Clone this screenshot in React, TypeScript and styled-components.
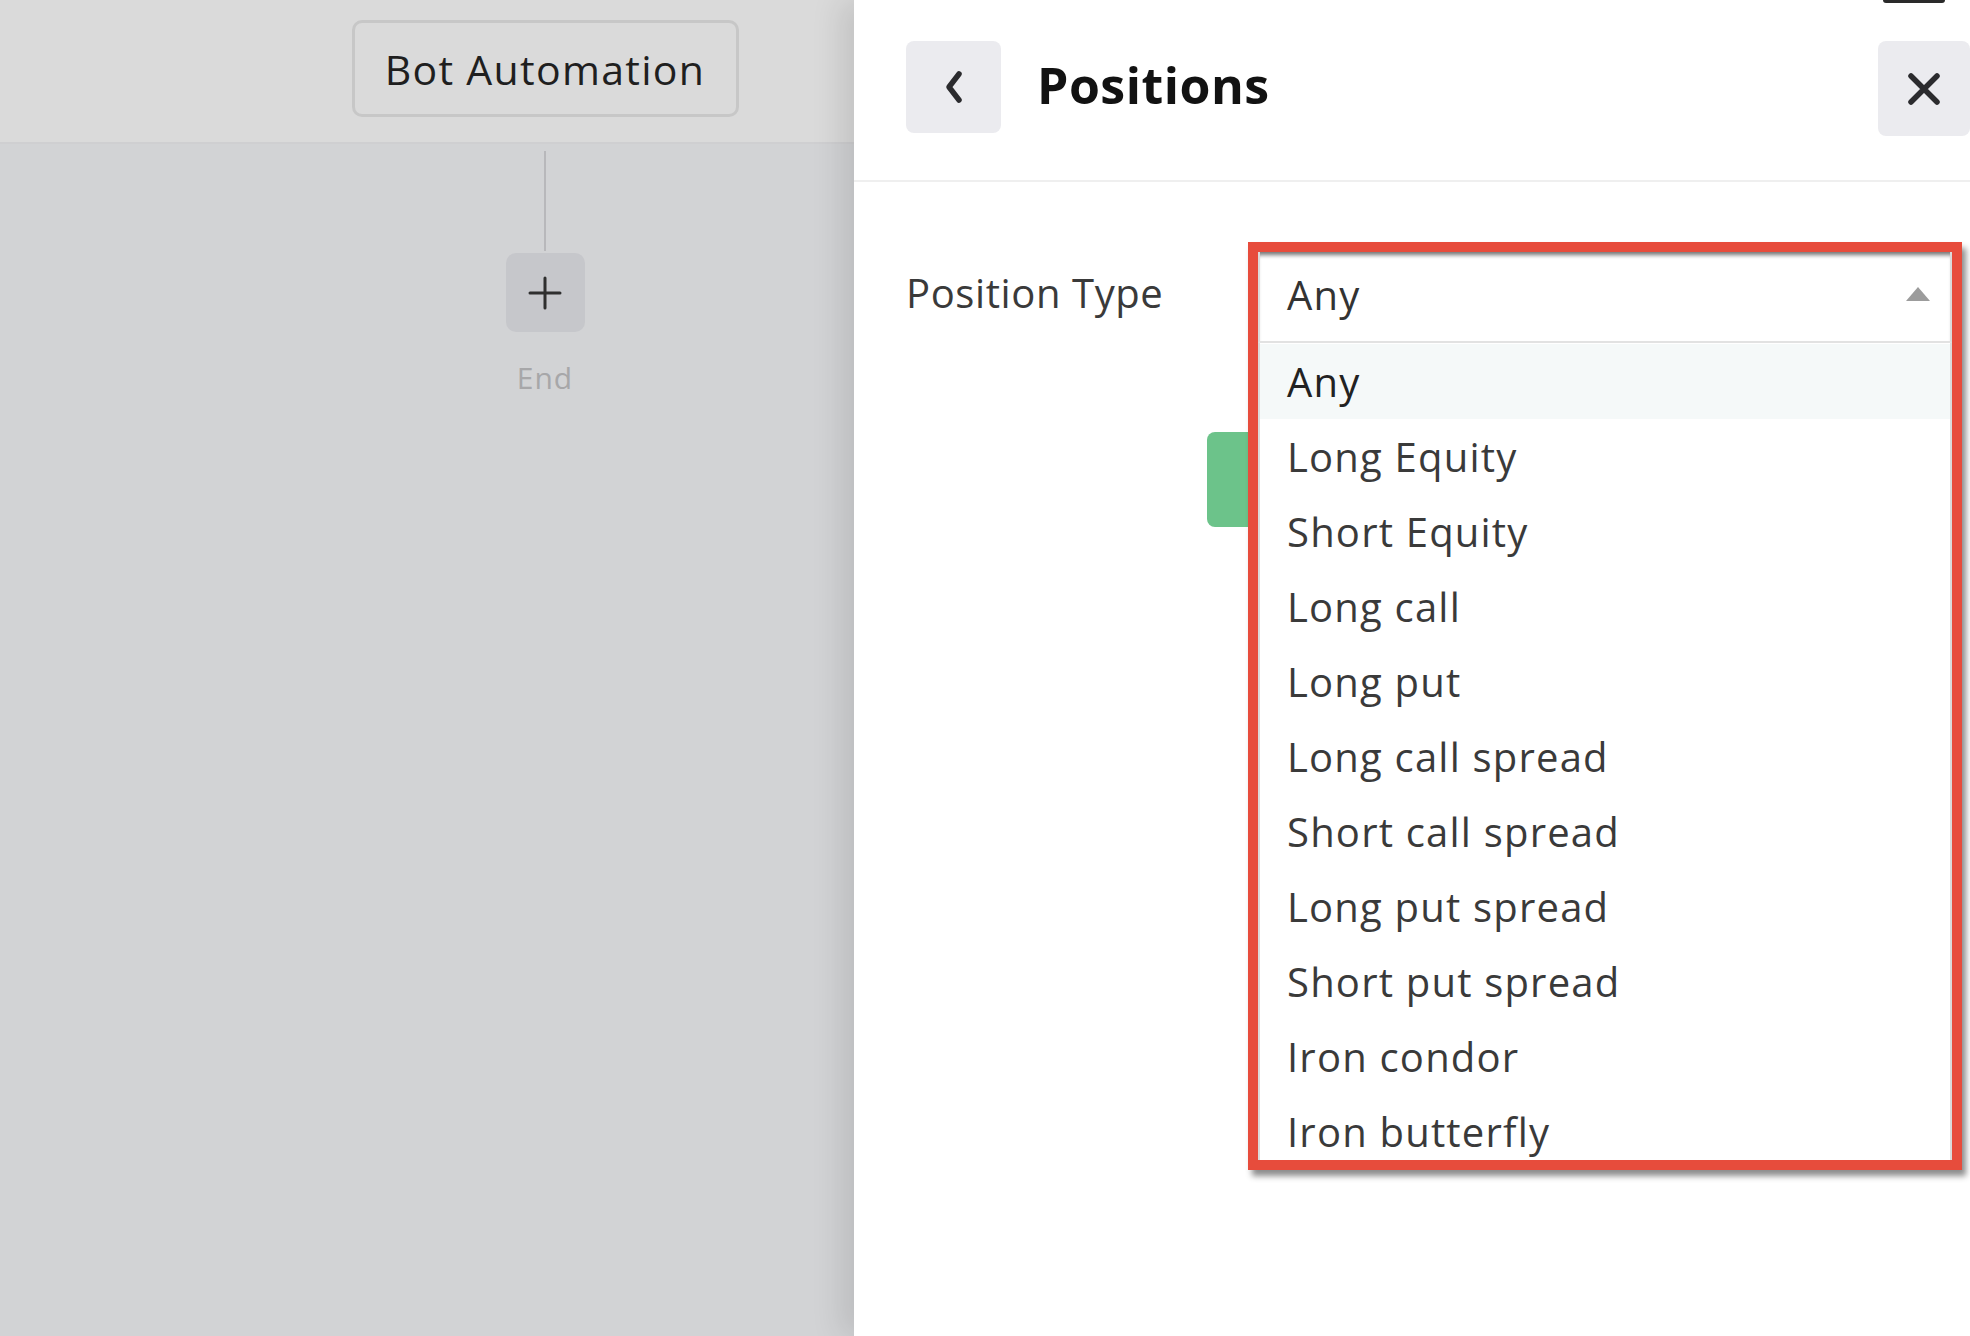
import React from "react";
import styled, { createGlobalStyle } from "styled-components";

const GlobalStyle = createGlobalStyle`
  html, body {
    margin: 0;
    padding: 0;
  }
  body {
    font-family: "Open Sans", "Liberation Sans", sans-serif;
    background: #ffffff;
  }
  * {
    box-sizing: border-box;
  }
`;

const Screen = styled.div`
  display: flex;
  width: 1970px;
  height: 1336px;
  overflow: hidden;
`;

/* ---------- left: flow canvas (dimmed behind the drawer) ---------- */

const Canvas = styled.section`
  width: 854px;
  flex-shrink: 0;
  display: flex;
  flex-direction: column;
  background: #d2d3d5;
`;

const CanvasHeader = styled.div`
  height: 144px;
  display: flex;
  justify-content: center;
  align-items: flex-start;
  padding: 20px 0 0 236px;
  background: #dadada;
  border-bottom: 2px solid #cfcfd1;
`;

const BotBox = styled.div`
  width: 387px;
  height: 97px;
  display: flex;
  align-items: center;
  justify-content: center;
  border: 3px solid #c7c7c7;
  border-radius: 10px;
  font-size: 41px;
  letter-spacing: 1.3px;
  color: #1f1f1f;
`;

const Flow = styled.div`
  display: flex;
  flex-direction: column;
  align-items: center;
  padding-left: 236px;
`;

const Connector = styled.div`
  width: 2px;
  height: 100px;
  margin-top: 7px;
  background: #b8b8bb;
`;

const AddStep = styled.div`
  width: 79px;
  height: 79px;
  margin-top: 2px;
  display: flex;
  align-items: center;
  justify-content: center;
  border-radius: 10px;
  background: #c6c7cb;
`;

const EndLabel = styled.div`
  margin-top: 26px;
  font-size: 30px;
  line-height: 40px;
  letter-spacing: 1px;
  color: #a7a7a9;
`;

/* ---------- right: drawer ---------- */

const Drawer = styled.section`
  flex: 1;
  position: relative;
  z-index: 1;
  background: #ffffff;
  box-shadow: -14px 0 28px rgba(0, 0, 0, 0.1);
`;

const TopTab = styled.div`
  position: absolute;
  top: 0;
  right: 25px;
  width: 62px;
  height: 3px;
  border-radius: 0 0 4px 4px;
  background: #2a2a2a;
`;

const DrawerHeader = styled.header`
  height: 182px;
  display: flex;
  align-items: flex-start;
  padding: 41px 0 0 52px;
  border-bottom: 2px solid #efefef;
`;

const IconButton = styled.button<{ $push?: boolean }>`
  width: ${p => (p.$push ? "92px" : "95px")};
  height: ${p => (p.$push ? "95px" : "92px")};
  margin-left: ${p => (p.$push ? "auto" : "0")};
  display: flex;
  align-items: center;
  justify-content: center;
  padding: 0;
  border: none;
  border-radius: 8px;
  background: #ebebef;
  color: #2b2b2e;
`;

const Title = styled.h1`
  margin: 0 0 0 36px;
  font-size: 50px;
  line-height: 88px;
  font-weight: 700;
  letter-spacing: 0.5px;
  color: #121212;
`;

const Body = styled.div`
  padding: 60px 0 0 52px;
`;

const FieldRow = styled.div`
  display: flex;
  align-items: flex-start;
`;

const FieldLabel = styled.label`
  width: 342px;
  margin-top: 25px;
  font-size: 40px;
  line-height: 52px;
  letter-spacing: 0.6px;
  color: #3a3a3a;
`;

const Control = styled.div`
  position: relative;
  width: 714px;
  height: 101px;
`;

/* the open select, ringed by the red highlight */
const Frame = styled.div`
  position: absolute;
  top: 0;
  left: 0;
  width: 714px;
  z-index: 2;
  border: 10px solid #e74c3c;
  background: #ffffff;
  box-shadow: 4px 6px 6px rgba(0, 0, 0, 0.45);
`;

const SelectField = styled.div`
  height: 91px;
  display: flex;
  align-items: center;
  justify-content: space-between;
  padding: 0 20px 5px 27px;
  border-left: 2px solid #dadada;
  border-right: 2px solid #dadada;
  border-bottom: 2px solid #e2e2e2;
  box-shadow: inset 0 6px 4px -3px rgba(0, 0, 0, 0.55);
  font-size: 40px;
  letter-spacing: 1.2px;
  color: #333333;
`;

const Caret = styled.span`
  width: 0;
  height: 0;
  border-left: 12px solid transparent;
  border-right: 12px solid transparent;
  border-bottom: 14px solid #9c9c9c;
`;

const Menu = styled.ul`
  height: 817px;
  margin: 0;
  padding: 1px 0 0;
  list-style: none;
  overflow: hidden;
  border-left: 2px solid #dadada;
  border-right: 2px solid #dadada;
`;

const Option = styled.li<{ $active?: boolean }>`
  height: 75px;
  display: flex;
  align-items: center;
  padding-left: 27px;
  font-size: 40px;
  letter-spacing: 1.2px;
  color: ${p => (p.$active ? "#222222" : "#3a3a3a")};
  background: ${p => (p.$active ? "#f5f9f9" : "transparent")};
`;

const ActionRow = styled.div`
  margin: 89px 0 0 301px;
`;

const SaveButton = styled.button`
  width: 220px;
  height: 95px;
  border: none;
  border-radius: 8px;
  background: #6cc38a;
`;

const positionTypes = [
  "Any",
  "Long Equity",
  "Short Equity",
  "Long call",
  "Long put",
  "Long call spread",
  "Short call spread",
  "Long put spread",
  "Short put spread",
  "Iron condor",
  "Iron butterfly",
];

const PlusIcon = () => (
  <svg width="34" height="34" viewBox="0 0 34 34" fill="none">
    <path d="M17 2v30M2 17h30" stroke="#2f2f2f" strokeWidth="3" strokeLinecap="round" />
  </svg>
);

const ChevronLeft = () => (
  <svg width="22" height="34" viewBox="0 0 22 34" fill="none">
    <path d="M16 4L6 17l10 13" stroke="currentColor" strokeWidth="5.5" strokeLinecap="round" strokeLinejoin="round" />
  </svg>
);

const CloseIcon = () => (
  <svg width="34" height="34" viewBox="0 0 34 34" fill="none">
    <path d="M4 4l26 26M30 4L4 30" stroke="currentColor" strokeWidth="5.5" strokeLinecap="round" />
  </svg>
);

const App: React.FC = () => {
  const selected = "Any";
  return (
    <>
      <GlobalStyle />
      <Screen>
        <Canvas>
          <CanvasHeader>
            <BotBox>Bot Automation</BotBox>
          </CanvasHeader>
          <Flow>
            <Connector />
            <AddStep>
              <PlusIcon />
            </AddStep>
            <EndLabel>End</EndLabel>
          </Flow>
        </Canvas>

        <Drawer>
          <TopTab />
          <DrawerHeader>
            <IconButton aria-label="Back">
              <ChevronLeft />
            </IconButton>
            <Title>Positions</Title>
            <IconButton $push aria-label="Close">
              <CloseIcon />
            </IconButton>
          </DrawerHeader>

          <Body>
            <FieldRow>
              <FieldLabel>Position Type</FieldLabel>
              <Control>
                <Frame>
                  <SelectField>
                    <span>{selected}</span>
                    <Caret />
                  </SelectField>
                  <Menu>
                    {positionTypes.map(type => (
                      <Option key={type} $active={type === selected}>
                        {type}
                      </Option>
                    ))}
                  </Menu>
                </Frame>
              </Control>
            </FieldRow>
            <ActionRow>
              <SaveButton aria-label="Save" />
            </ActionRow>
          </Body>
        </Drawer>
      </Screen>
    </>
  );
};

export default App;
